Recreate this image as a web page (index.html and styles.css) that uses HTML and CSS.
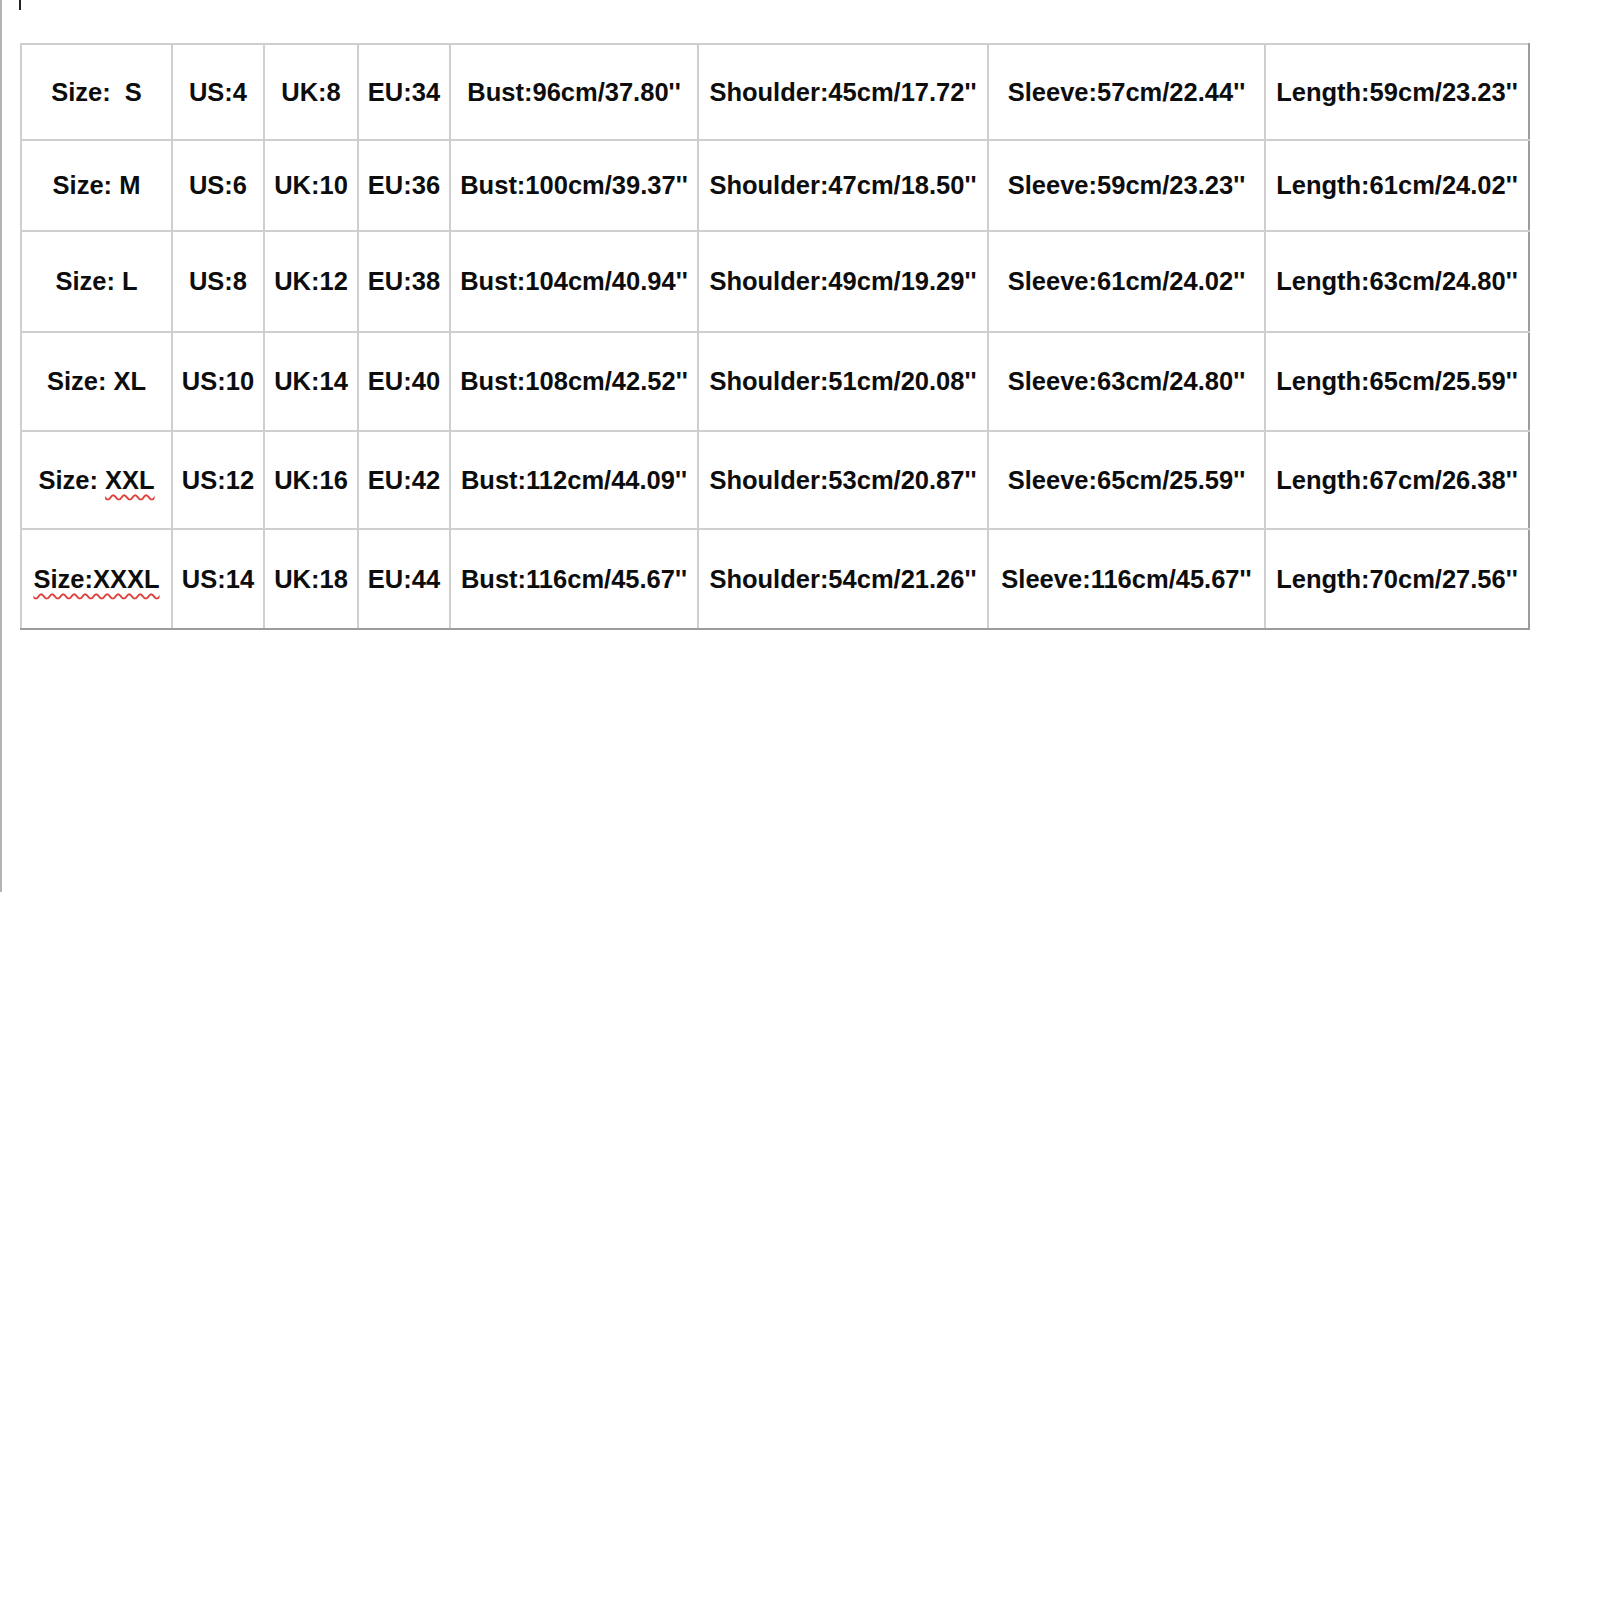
FILE: index.html
```
<!DOCTYPE html>
<html>
<head>
	<meta charset="utf-8">
	<title>Size Chart</title>
	<link rel="stylesheet" href="styles.css">
</head>
<body>
	<div class="page">
		<div class="cursor"></div>
		<table class="chart">
			<colgroup>
				<col class="c-size"><col class="c-us"><col class="c-uk"><col class="c-eu">
				<col class="c-bust"><col class="c-shoulder"><col class="c-sleeve"><col class="c-length">
			</colgroup>
			<tr>
				<td>Size:&nbsp; S</td><td>US:4</td><td>UK:8</td><td>EU:34</td>
				<td>Bust:96cm/37.80''</td><td>Shoulder:45cm/17.72''</td><td>Sleeve:57cm/22.44''</td><td>Length:59cm/23.23''</td>
			</tr>
			<tr>
				<td>Size: M</td><td>US:6</td><td>UK:10</td><td>EU:36</td>
				<td>Bust:100cm/39.37''</td><td>Shoulder:47cm/18.50''</td><td>Sleeve:59cm/23.23''</td><td>Length:61cm/24.02''</td>
			</tr>
			<tr>
				<td>Size: L</td><td>US:8</td><td>UK:12</td><td>EU:38</td>
				<td>Bust:104cm/40.94''</td><td>Shoulder:49cm/19.29''</td><td>Sleeve:61cm/24.02''</td><td>Length:63cm/24.80''</td>
			</tr>
			<tr>
				<td>Size: XL</td><td>US:10</td><td>UK:14</td><td>EU:40</td>
				<td>Bust:108cm/42.52''</td><td>Shoulder:51cm/20.08''</td><td>Sleeve:63cm/24.80''</td><td>Length:65cm/25.59''</td>
			</tr>
			<tr>
				<td>Size: <span class="typo">XXL</span></td><td>US:12</td><td>UK:16</td><td>EU:42</td>
				<td>Bust:112cm/44.09''</td><td>Shoulder:53cm/20.87''</td><td>Sleeve:65cm/25.59''</td><td>Length:67cm/26.38''</td>
			</tr>
			<tr>
				<td><span class="typo">Size:XXXL</span></td><td>US:14</td><td>UK:18</td><td>EU:44</td>
				<td>Bust:116cm/45.67''</td><td>Shoulder:54cm/21.26''</td><td>Sleeve:116cm/45.67''</td><td>Length:70cm/27.56''</td>
			</tr>
		</table>
	</div>
</body>
</html>
```

FILE: styles.css
```
body {
	margin: 0; background: #fff; font-family: "Liberation Sans", Arial, sans-serif;
}
.page {
	border-left: 2px solid #b4b4b4; height: 892px; padding-left: 18px; box-sizing: border-box;
}
.cursor { width: 2px; height: 10px; margin-left: -1px; background: #222; }

.chart {
	margin-top: 33px; border-collapse: collapse; table-layout: fixed; width: 1508px;
	border-right: 2px solid #9c9c9c; border-bottom: 2px solid #9c9c9c;
}
.chart td {
	border: 2px solid #cfcfcf; padding: 0; text-align: center; vertical-align: middle;
	font-size: 25.5px; font-weight: bold; color: #0d0d0d; white-space: nowrap;
}
.chart tr:nth-child(1) td { height: 93px; padding-top: 1px; }
.chart tr:nth-child(2) td { height: 89px; }
.chart tr:nth-child(3) td { height: 99px; }
.chart tr:nth-child(4) td { height: 97px; }
.chart tr:nth-child(5) td { height: 96px; }
.chart tr:nth-child(6) td { height: 98px; }
.chart td:last-child { border-right-color: #9c9c9c; }
.chart tr:last-child td { border-bottom-color: #9c9c9c; }

.c-size { width: 151px; } .c-us { width: 92px; } .c-uk { width: 94px; } .c-eu { width: 92px; }
.c-bust { width: 248px; } .c-shoulder { width: 290px; } .c-sleeve { width: 277px; } .c-length { width: 264px; }

.typo {
	text-decoration: underline wavy #e0403a; text-decoration-thickness: 1.5px; text-underline-offset: 5px;
}
```
